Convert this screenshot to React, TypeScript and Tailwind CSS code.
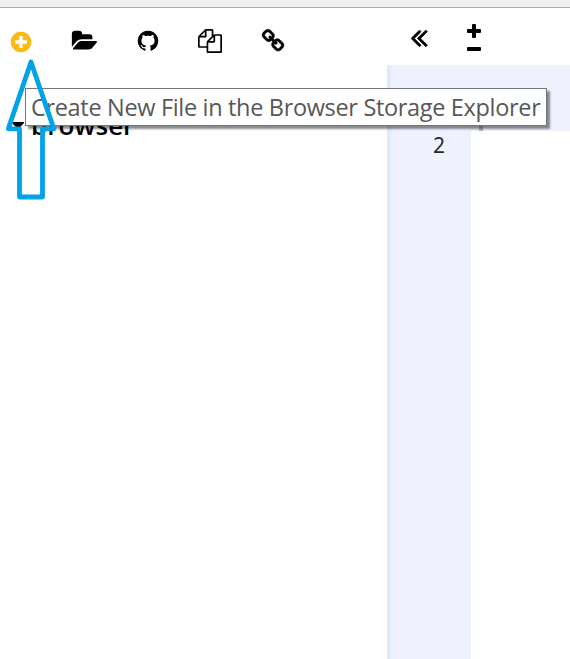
import React from "react";

type IconProps = { path: string; className: string; viewBox?: string };

function Icon({ path, className, viewBox = "0 0 1792 1792" }: IconProps) {
  return (
    <svg viewBox={viewBox} className={`block shrink-0 ${className}`} fill="currentColor" aria-hidden="true">
      <path d={path} />
    </svg>
  );
}

const PLUS_CIRCLE =
  "M1344 960v-128q0-26-19-45t-45-19h-256v-256q0-26-19-45t-45-19h-128q-26 0-45 19t-19 45v256h-256q-26 0-45 19t-19 45v128q0 26 19 45t45 19h256v256q0 26 19 45t45 19h128q26 0 45-19t19-45v-256h256q26 0 45-19t19-45zm320-64q0 209-103 385.5t-279.5 279.5-385.5 103-385.5-103-279.5-279.5-103-385.5 103-385.5 279.5-279.5 385.5-103 385.5 103 279.5 279.5 103 385.5z";
const FOLDER_OPEN =
  "M1943 952q0 31-31 66l-336 396q-43 51-120.5 86.5t-143.5 35.5h-1088q-34 0-60.5-13t-26.5-43q0-31 31-66l336-396q43-51 120.5-86.5t143.5-35.5h1088q34 0 60.5 13t26.5 43zm-343-344v160h-832q-94 0-197 47.5t-164 119.5l-337 396-5 6q0-4-.5-12.5t-.5-12.5v-960q0-92 66-158t158-66h320q92 0 158 66t66 158v32h544q92 0 158 66t66 158z";
const GITHUB =
  "M896 128q209 0 385.5 103t279.5 279.5 103 385.5q0 251-146.5 451.5t-378.5 277.5q-27 5-40-7t-13-30q0-3 .5-76.5t.5-134.5q0-97-52-142 57-6 102.5-18t94-39 81-66.5 53-105 20.5-150.5q0-119-79-206 37-91-8-204-28-9-81 11t-92 44l-38 24q-93-26-192-26t-192 26q-16-11-42.5-27t-83.5-38.5-85-13.5q-45 113-8 204-79 87-79 206 0 85 20.5 150t52.5 105 80.5 67 94 39 102.5 18q-39 36-49 103-21 10-45 15t-57 5-65.5-21.5-55.5-62.5q-19-32-48.5-52t-49.5-24l-20-3q-21 0-29 4.5t-5 11.5 9 14 13 12l7 5q22 10 43.5 38t31.5 51l10 23q13 38 44 61.5t67 30 69.5 7 55.5-3.5l23-4q0 38 .5 88.5t.5 54.5q0 18-13 30t-40 7q-232-77-378.5-277.5t-146.5-451.5q0-209 103-385.5t279.5-279.5 385.5-103z";
const FILES =
  "M1696 384q40 0 68 28t28 68v1216q0 40-28 68t-68 28h-960q-40 0-68-28t-28-68v-288h-544q-40 0-68-28t-28-68v-672q0-40 20-88t48-76l408-408q28-28 76-48t88-20h416q40 0 68 28t28 68v328q68-40 128-40h416zm-544 213l-299 299h299v-299zm-640-384l-299 299h299v-299zm196 647l316-316v-416h-384v416q0 40-28 68t-68 28h-416v640h512v-256q0-40 20-88t48-76zm956 804v-1152h-384v416q0 40-28 68t-68 28h-416v640h896z";
const LINK =
  "M1520 1216q0-40-28-68l-208-208q-28-28-68-28-42 0-72 32 3 3 19 18.5t21.5 21.5 15 19 13 25.5 3.5 27.5q0 40-28 68t-68 28q-15 0-27.5-3.5t-25.5-13-19-15-21.5-21.5-18.5-19q-33 31-33 73 0 40 28 68l206 207q27 27 68 27 40 0 68-26l147-146q28-28 28-67zm-703-705q0-40-28-68l-206-207q-28-28-68-28-39 0-68 27l-147 146q-28 28-28 67 0 40 28 68l208 208q27 27 68 27 42 0 72-31-3-3-19-18.5t-21.5-21.5-15-19-13-25.5-3.5-27.5q0-40 28-68t68-28q15 0 27.5 3.5t25.5 13 19 15 21.5 21.5 18.5 19q33-31 33-73zm895 705q0 120-85 203l-147 146q-83 83-203 83-121 0-204-85l-206-207q-83-83-83-203 0-123 88-209l-88-88q-86 88-208 88-120 0-204-84l-208-208q-84-84-84-204t85-203l147-146q83-83 203-83 121 0 204 85l206 207q83 83 83 203 0 123-88 209l88 88q86-88 208-88 120 0 204 84l208 208q84 84 84 204z";
const ANGLES_LEFT =
  "M1011 1376q0 13-10 23l-50 50q-10 10-23 10t-23-10l-466-466q-10-10-10-23t10-23l466-466q10-10 23-10t23 10l50 50q10 10 10 23t-10 23l-393 393 393 393q10 10 10 23zm384 0q0 13-10 23l-50 50q-10 10-23 10t-23-10l-466-466q-10-10-10-23t10-23l466-466q10-10 23-10t23 10l50 50q10 10 10 23t-10 23l-393 393 393 393q10 10 10 23z";

export default function App() {
  return (
    <div className="relative flex h-[659px] w-[570px] flex-col overflow-hidden bg-white font-['Open_Sans','Noto_Sans',sans-serif] text-black">
      <div className="h-2 shrink-0 border-b border-[#acacac] bg-[#f0f0f0]" />

      <div className="flex min-h-0 flex-1">
        <aside className="flex w-[387px] shrink-0 flex-col">
          <div className="flex h-[57px] items-start pt-[21px] pl-[9px]">
            <Icon path={PLUS_CIRCLE} className="mt-[0.5px] size-6 text-[#fdb913]" />
            <Icon path={FOLDER_OPEN} viewBox="0 0 2048 1792" className="ml-[38px] h-6 w-[27.43px]" />
            <Icon path={GITHUB} className="ml-[37.57px] size-6" />
            <Icon path={FILES} className="ml-[38px] size-6" />
            <Icon path={LINK} className="ml-[39px] size-6 stroke-black stroke-[35]" />
          </div>
          <div className="mt-[42px] flex h-9 items-center pl-3">
            <svg viewBox="0 0 12 7" className="mr-[7px] h-[7px] w-3" fill="currentColor">
              <path d="M0 0h12v1L7 6.3q-1 .9-2 0L0 1z" />
            </svg>
            <span className="text-[26px] leading-9 font-semibold">browser</span>
          </div>
        </aside>

        <main className="flex min-w-0 flex-1 flex-col">
          <div className="flex h-[57px] shrink-0 items-start">
            <Icon
              path={ANGLES_LEFT}
              viewBox="409 451 1006 1028"
              className="mt-[21.5px] ml-6 h-[17px] w-[16.5px] stroke-black stroke-[50]"
            />
            <div className="mt-4 ml-[39.5px] flex flex-col items-center gap-[9px]">
              <svg viewBox="0 0 14 14" className="size-[14px]" fill="currentColor">
                <path d="M6 0h2q1 0 1 1v4h4q1 0 1 1v2q0 1-1 1H9v4q0 1-1 1H6q-1 0-1-1V9H1Q0 9 0 8V6q0-1 1-1h4V1q0-1 1-1z" />
              </svg>
              <div className="h-1 w-[14px] rounded-[1px] bg-black" />
            </div>
          </div>
          <div className="flex min-h-0 flex-1 border-l-4 border-[#e0eafb]">
            <div className="w-20 shrink-0 bg-[#eff1ff] pt-[65px] pr-[26px] text-right font-['Noto_Sans',sans-serif] text-[21px] leading-[30px] text-[#292a35]">
              2
            </div>
            <div className="flex h-[66px] flex-1 items-end bg-[#eff1ff] pl-2">
              <div className="h-9 w-1 bg-[#b1b2be]" />
            </div>
          </div>
        </main>
      </div>

      <div className="absolute top-[88px] left-[25px] flex h-[38px] w-[522px] items-center border border-[#767676] bg-white pl-[5px] shadow-[3px_3px_2px_rgba(0,0,0,0.45)]">
        <span className="text-[23.5px] leading-9 tracking-[-0.33px] whitespace-nowrap text-[#575757]">
          Create New File in the Browser Storage Explorer
        </span>
      </div>

      <svg viewBox="0 0 60 150" className="absolute top-[56px] left-0 h-[150px] w-[60px]" fill="none">
        <path d="M31 6L53.8 72.8H42.5V141H19.5V72.8H8.3Z" stroke="#00a2e8" strokeWidth="4.8" strokeLinejoin="round" />
      </svg>
    </div>
  );
}
